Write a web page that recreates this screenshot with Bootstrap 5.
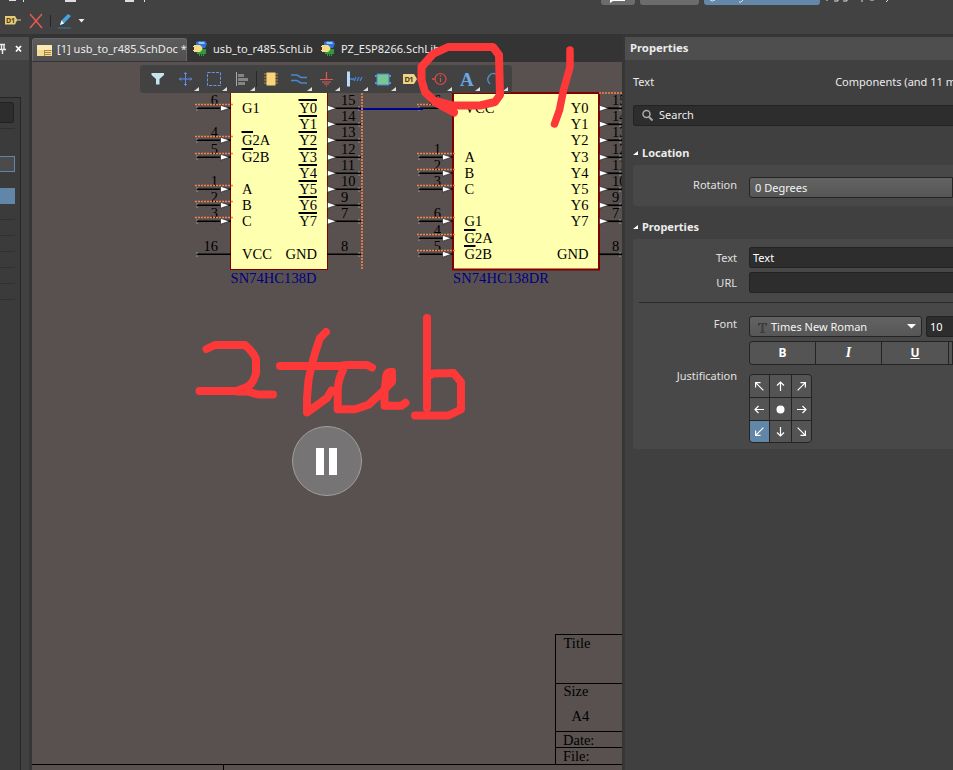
<!DOCTYPE html>
<html lang="en">
<head>
<meta charset="utf-8">
<title>usb_to_r485.SchDoc</title>
<link href="https://cdn.jsdelivr.net/npm/bootstrap@5.3.0/dist/css/bootstrap.min.css" rel="stylesheet">
<style>
body{font:11px/16px "Noto Sans","Open Sans",sans-serif;color:#ececec;background:#363636;width:953px;height:770px}
svg{display:block;flex:none}
.topbar{height:34px;background:#424242}
.leftbar{width:29px;background:#414141;margin-top:3px}
.left-head{height:23px;background:#4e4e4e}
.left-box{margin-top:37px;width:21px;background:#3b3b3b;border:1px solid #252525;border-left:0;border-bottom:0;height:673px}
.left-input{width:14px;height:21px;margin-top:4px;background:#2d2d2d;border:1px solid #222;border-left:0;border-radius:0 3px 3px 0}
.left-edit{width:15px;height:16px;margin-top:27px;border:1px solid #6186a8;border-left:0;background:#4b4b4b}
.left-sel{width:15px;height:16px;margin-top:16px;background:#6186a8}
.left-line{width:15px;height:16px;border-bottom:1px solid #303030}
.docs{width:590px;margin-left:3px}
.tabs{height:28px;background:#343434;padding-top:4px}
.tab-cell{height:23px}
.tab-lib{width:128px}
.tab-on{width:155px;height:23px;background:linear-gradient(#5c5c5c,#505050);border:1px solid #686868;border-bottom:0;border-radius:3px 3px 0 0}
.tab-txt{letter-spacing:.04px;position:relative;top:-1px}
.tools{left:108px;top:3px;width:372px;height:28px;background:#424242;border-radius:4px}
.pause{left:260px;top:364px;width:70px;height:70px;background:#767474;border:1px solid #a09e9e}
.pause-bars{gap:5px;margin-right:2px}
.pause i{width:8px;height:27px;background:#fff}
.ink{left:0;top:0;pointer-events:none}
.props{width:328px;margin:3px 0 0 3px;background:#404040}
.props-head{height:23px;background:#4e4e4e;padding:3px 5px;font-weight:700;font-size:11.300px}
.props-scope{height:45px;padding:14px 0 0 8px}
.components{margin-left:181px}
.search{height:21px;margin-left:8px;padding:0 0 2px 8px;background:#2d2d2d;border:1px solid #222;border-right:0;border-radius:3px 0 0 3px}
.sec{margin-left:8px;font-weight:700;height:16px}
.box{margin-left:8px;background:#484848;border-radius:3px 0 0 3px}
.lab{width:104px;text-align:right;margin-right:12px;color:#e0e0e0;flex:none}
.field{height:21px;background:#2d2d2d;border:1px solid #222;border-radius:3px 0 0 3px;border-right:0;padding:1px 3px;line-height:18px;color:#fff}
.pick{background:linear-gradient(#636363,#565656);border:1px solid #242424;height:21px;border-radius:3px;color:#f4f4f4;line-height:19px}
.style-btn{width:66px;height:22px;border-right:1px solid #242424;background:#545454;font-size:12px;line-height:21px;color:#fff}
.style-set{height:24px;border:1px solid #242424;border-right:0;border-radius:4px 0 0 4px}
.just{display:grid;grid-template-columns:19px 21px 19px;grid-template-rows:22px 22px 21px;gap:1px;background:#242424;border:1px solid #242424;border-radius:4px;width:63px;height:69px;overflow:hidden}
.just span{background:#545454}
.just .on{background:#6186a8}
</style>
<script src="https://cdn.jsdelivr.net/npm/bootstrap@5.3.0/dist/js/bootstrap.bundle.min.js"></script>
</head>
<body class="position-relative overflow-hidden d-flex flex-column">
<header class="topbar flex-shrink-0">
<svg width="953" height="34">
<g fill="#ddd"><path d="M9 0h7v1h-7zM65 0h11v2h-11zM125 0h9v2h-9zM23 0h1v2h-1zM144 0h1v2h-1z"/></g>
<path d="M601 0h34v2q0 3-3 3h-28q-3 0-3-3zM640 0h59v2q0 3-3 3h-53q-3 0-3-3z" fill="#6c6c6c"/>
<path d="M704 0h116v2q0 3-3 3H707q-3 0-3-3z" fill="#6388a9"/>
<path d="M610 0h15v1h-12l-3 2z" fill="#fff"/>
<g fill="none" stroke="#e0e0e0"><path d="M710 0q2 2 5 0M739 2h2l2-2M827 0v1M834 1h4v-1M843 1h4v-1M862 0v2M870 0h4M886 2l2-2"/></g>
<path d="M5 16h10l2 3.500h4v1h-4l-2 4H5z" fill="#e9cb76"/><text x="6" y="23" font-size="7" font-weight="700" fill="#4b4022" textLength="9">D1</text>
<path d="M30 14l12 14M42 14L30 28" stroke="#e2594f" stroke-width="1.600"/>
<path d="M50.500 15v12" stroke="#262626"/>
<path d="M60 25l1.500-4.500L68 14l3 2-7 7.500z" fill="#45a5df"/><path d="M60 25l1.500-4.500 2.500 3z" fill="#fff"/><path d="M58 28h13" stroke="#2c78a8"/>
<path d="M78.500 19h6l-3 3.500z" fill="#eee"/>
</svg>
</header>
<main class="d-flex flex-grow-1">
<aside class="leftbar flex-shrink-0">
<div class="left-head"><svg width="29" height="23"><path d="M0 7.500h5M1.500 7v5M4 7v5M0 12.500h6M2.500 12v5" stroke="#eee" stroke-width="1.400"/><path d="M16 9l5 5.500M21 9l-5 5.500" stroke="#fff" stroke-width="1.800"/></svg></div>
<div class="left-box"><div class="left-input"></div><div class="left-line" style="height:6px"></div><div class="left-edit"></div><div class="left-sel"></div>
<div class="left-line"></div><div class="left-line"></div><div class="left-line"></div><div class="left-line"></div><div class="left-line"></div><div class="left-line"></div></div>
</aside>
<section class="docs flex-shrink-0 d-flex flex-column">
<nav class="tabs d-flex">
<div class="tab-on d-flex align-items-center">
<svg width="24" height="21"><path d="M4 5h15v11H4z" fill="#f5dc92"/><path d="M4 5h15v5H4z" fill="#fae9b4"/><path d="M11.500 10.500h7M12 12.500h6M12 14.500h6M11.500 10v6" stroke="#a88b46"/></svg>
<span class="tab-txt text-nowrap">[1] usb_to_r485.SchDoc *</span></div>
<div class="tab-cell tab-lib d-flex align-items-center"><svg width="26" height="23"><path d="M9 4l3-1h6l2 3-2 4H9z" fill="#2f74d6"/><path d="M11 4h6l1 2h-6z" fill="#8fc4ff"/><path d="M9 11h10v5h-2v2h-1v-2h-1v2h-1v-2h-1v2h-1v-2h-2z" fill="#2d9b37"/><path d="M6 8h1V7h6q5 3.500 0 7H7v-1H6v-1h1V9H6z" fill="#f8dc88"/></svg><span class="tab-txt">usb_to_r485.SchLib</span></div>
<div class="tab-cell d-flex align-items-center"><svg width="26" height="23"><path d="M9 4l3-1h6l2 3-2 4H9z" fill="#2f74d6"/><path d="M11 4h6l1 2h-6z" fill="#8fc4ff"/><path d="M9 11h10v5h-2v2h-1v-2h-1v2h-1v-2h-1v2h-1v-2h-2z" fill="#2d9b37"/><path d="M6 8h1V7h6q5 3.500 0 7H7v-1H6v-1h1V9H6z" fill="#f8dc88"/></svg><span class="tab-txt">PZ_ESP8266.SchLib</span></div>
</nav>
<div class="position-relative">
<svg width="590" height="708" viewBox="32 62 590 708" font-family="'Liberation Serif',serif" font-size="14.500">
<rect x="32" y="62" width="590" height="708" fill="#585150"/>
<rect x="230.500" y="80.500" width="97" height="189" fill="#ffffb0" stroke="#800000"/>
<rect x="453" y="93" width="146" height="176.500" fill="#ffffb0" stroke="#800000" stroke-width="2"/>
<g id="pins"></g>
<path d="M359 109h64" stroke="#000090" stroke-width="2"/>
<path d="M362 93v176" stroke="#f5834c" stroke-width="1.600" stroke-dasharray="2 1"/>
<path d="M599 93h23" stroke="#f5834c" stroke-width="1.500" stroke-dasharray="2 1"/>
<g fill="#000080"><text x="230.500" y="283" textLength="86">SN74HC138D</text><text x="453" y="283" textLength="96">SN74HC138DR</text></g>
<path d="M555.500 764V634.500H622M555 683.500h67M555 731.500h67M555 747.500h67M32 764.500h590M223.500 764v6" fill="none" stroke="#000"/>
<text x="563.500" y="648">Title</text><text x="563.500" y="696">Size</text><text x="571.500" y="721">A4</text><text x="563" y="745">Date:</text><text x="563" y="761">File:</text>
</svg>
<div class="tools position-absolute">
<svg width="372" height="28" viewBox="140 65 372 28" fill="none">
<path d="M151.500 73h12.500v2l-4.500 4v5.500h-3.500V79l-4.500-4z" fill="#c5e4ee"/>
<path d="M179 79h13M185.500 72.500v13M184 74l1.500-1.500L187 74M184 84l1.500 1.500L187 84M181 77.500l-1.500 1.500 1.500 1.500M190 77.500l1.500 1.500-1.500 1.500" stroke="#5d8ee6"/>
<path d="M207.500 72.500h13v13h-13z" stroke="#6a92ee" stroke-dasharray="3 1.300"/>
<path d="M236.500 72v14" stroke="#aaa"/><path d="M238 74h6v3h-6zM238 78h10v3h-10zM238 82h7v3h-7z" fill="#858585"/>
<path d="M256.500 71v16" stroke="#292929"/>
<path d="M264 74h14M264 77h14M264 80h14M264 83h14" stroke="#b88a3c"/><path d="M266.500 72.500h9v13h-9z" fill="#fbd37b"/>
<path d="M291 75h6l4 2.500h6M291 80.500h6l4 2.500h6" stroke="#448bd0" stroke-width="1.500"/>
<path d="M326.500 72v7M320 79.500h13M322 82h9M324 84h5M326 86h1" stroke="#dd5b55" stroke-width="1.200"/>
<path d="M347 71.500h3v15h-3z" fill="#b6dcff"/><path d="M350 79h4M354 81l2-4M357 81l2-4M360 81l2-4" stroke="#4a84de" stroke-width="1.300"/>
<path d="M375 76h16M375 83h16" stroke="#5d91d9" stroke-width="2"/><path d="M377 74h12v11h-12z" fill="#76c795" stroke="#4e82cd"/>
<path d="M403 74h11l3 5-3 5h-11z" fill="#efd382"/><text x="404.500" y="82" font-size="7.500" font-weight="700" fill="#4b4022" textLength="9">D1</text>
<circle cx="440.500" cy="79" r="5.500" stroke="#e04c48" stroke-width="1.200"/><path d="M440.500 75v1.500M440.500 78v4M432 79h3" stroke="#e04c48" stroke-width="1.300"/>
<text x="460" y="86" font-family="Liberation Serif,serif" font-weight="700" font-size="19" fill="#6ba8e6">A</text>
<path d="M490 84q-4-4-1-8t7-2" stroke="#558ed2" stroke-width="1.300"/>
<path d="M199 87v4h-5zM227 87v4h-5zM255 87v4h-5zM312 87v4h-5zM340 87v4h-5zM368 87v4h-5zM396 87v4h-5zM452 87v4h-5zM480 87v4h-5zM508 87v4h-5z" fill="#ddd"/>
</svg></div>
<div class="pause position-absolute rounded-circle d-flex justify-content-center align-items-center"><div class="pause-bars d-flex"><i></i><i></i></div></div>
</div>
</section>
<aside class="props flex-shrink-0 overflow-hidden">
<div class="props-head">Properties</div>
<div class="props-scope d-flex text-nowrap"><span>Text</span><span class="components">Components (and 11 more)</span></div>
<div class="search d-flex align-items-center"><svg width="17" height="16"><circle cx="4.500" cy="7" r="3.500" fill="none" stroke="#aaa" stroke-width="1.500"/><path d="M7 10l3.500 3.500" stroke="#aaa" stroke-width="2"/></svg><span>Search</span></div>
<div class="sec d-flex align-items-center" style="margin-top:19px"><svg width="9" height="8"><path d="M5 2v4H0z" fill="#fff"/></svg><span>Location</span></div>
<div class="box d-flex" style="height:41px;margin-top:4px;padding-top:12px"><span class="lab">Rotation</span><div class="pick flex-grow-1 rounded-end-0" style="padding-left:5px">0 Degrees</div></div>
<div class="sec d-flex align-items-center" style="margin-top:13px"><svg width="9" height="8"><path d="M5 2v4H0z" fill="#fff"/></svg><span>Properties</span></div>
<div class="box" style="height:210px;margin-top:4px;padding-top:8px">
<div class="d-flex"><span class="lab" style="height:25px;padding-top:3px">Text</span><div class="field flex-grow-1">Text</div></div>
<div class="d-flex"><span class="lab" style="height:30px;padding-top:3px">URL</span><div class="field flex-grow-1"></div></div>
<div style="height:1px;background:#2b2b2b;margin-left:6px"></div>
<div class="d-flex" style="margin-top:13px"><span class="lab">Font</span><div class="pick d-flex align-items-center" style="width:173px"><svg width="21" height="18"><path d="M8 5h9v3h-1l-1-2h-1.500v8h1.500v1h-5v-1h1.500V6H10L9 8H8z" fill="#3c3c3c"/></svg><span class="flex-grow-1">Times New Roman</span><svg width="14" height="8"><path d="M0 1h9L4.500 5.500z" fill="#fff"/></svg></div><div class="field flex-grow-1" style="margin-left:4px">10</div></div>
<div class="d-flex" style="margin-top:4px"><span class="lab"></span><div class="style-set d-flex overflow-hidden flex-grow-1 text-center fw-bold"><span class="style-btn flex-shrink-0">B</span><span class="style-btn flex-shrink-0 fst-italic" style="font-family:'Liberation Serif',serif;font-size:14px">I</span><span class="style-btn flex-shrink-0 text-decoration-underline" style="width:67px">U</span><span class="style-btn"></span></div></div>
<div class="d-flex" style="margin-top:9px"><span class="lab" style="margin-top:-6px">Justification</span><div class="just" id="just"></div></div>
</div>
</aside>
</main>
<svg class="ink position-absolute" width="953" height="770" fill="none" stroke="#fd3838" stroke-width="8" stroke-linecap="round" stroke-linejoin="round">
<path d="M206.500 349l8.500-4h30q9 8 11 14v14q-2 9-8 13.500l-11.500 4.500h-37M237 391.500h10l11 3h15"/>
<path d="M326 332l-6 6-5 15q-4 14-6.500 27l-1.500 18v14.500L327 398l4.500-7.500M280 366h60l7-1h20l5 2.500M343 370q-5 10-5.300 20v19.300H355l13.500-4.500 13-12 10.500-11v-10q-6 0-6 7l-1.500 13v14h17l4-3"/>
<path d="M427 318v90M427 377l6-3.500 20.500-.5 7.500 9v27.500l-12.500 6H415"/>
<path d="M570 50v17l-6.500 23-4 20-5 14" stroke-width="7.500"/><path d="M454 112.500L436.500 103 425 92l-3.500-12V67L433 54l15-7h45l6 8 1 40-5 7-15 3.500h-27L436 101"/>
</svg>
<script>
// Pins: side, wire y, number, name, overline, arrow shown, error mark without arrow
const chips=[
 {l:231,r:327,nl:242,nr:317,numL:218,numR:341,out:361,pins:[
  ['L',108,6,'G1',0,1],['L',140,4,'G2A',1,1],['L',157,5,'G2B',1,1],['L',189,1,'A',0,1],['L',205,2,'B',0,1],['L',221,3,'C',0,1],['L',254,16,'VCC',0,0],
  ['R',108,15,'Y0',2,1],['R',124,14,'Y1',2,1],['R',140,13,'Y2',2,1],['R',157,12,'Y3',2,1],['R',173,11,'Y4',2,1],['R',189,10,'Y5',2,1],['R',205,9,'Y6',2,1],['R',221,7,'Y7',2,1],['R',254,8,'GND',0,0]]},
 {l:453,r:599,nl:464.5,nr:588.5,numL:441,numR:612,out:622,pins:[
  ['L',108,16,'VCC',0,0,1],['L',157,1,'A',0,1],['L',173,2,'B',0,1],['L',189,3,'C',0,1],['L',221,6,'G1',0,1],['L',238,4,'G2A',1,1],['L',254,5,'G2B',1,1],
  ['R',108,15,'Y0',0,1],['R',124,14,'Y1',0,1],['R',140,13,'Y2',0,1],['R',157,12,'Y3',0,1],['R',173,11,'Y4',0,1],['R',189,10,'Y5',0,1],['R',205,9,'Y6',0,1],['R',221,7,'Y7',0,1],['R',254,8,'GND',0,0]]}];
let s='';
for(const c of chips)for(const [side,y,n,name,bar,arrow,wave] of c.pins){
 const L=side=='L',a=L?c.l-34:c.r,b=L?c.l:c.out;
 s+=`<path d="M${a} ${y+.25}H${b}" stroke="#000" stroke-width="1.700"/>`;
 s+=`<text x="${L?c.numL:c.numR}" y="${y-3}" text-anchor="${L?'end':'start'}">${n}</text>`;
 s+=`<text x="${L?c.nl:c.nr}" y="${y+5.3}" text-anchor="${L?'start':'end'}">${name}</text>`;
 if(arrow){const x=L?c.l-11:c.r;s+=`<path d="M${x+.5} ${y-2.700}l9 2.900-9 3z" fill="#fff" stroke="#111" stroke-width=".6"/>`;}
 if(L&&(arrow||wave))s+=`<path d="M${c.l-36} ${y-3.500}h39" stroke="#f5834c" stroke-width="1.500" stroke-dasharray="2 1"/>`;
 if(bar)s+=L?`<path d="M${c.nl-.5} ${y-8}h11.500" stroke="#000" stroke-width="2"/>`:`<path d="M${c.nr-18.500} ${y-8}h18.500" stroke="#000" stroke-width="2"/>`;
 const e=L?c.l-34:c.out-2;
 s+=`<path d="M${e} ${y-2}v5" stroke="#77777e" stroke-width="2" stroke-dasharray="1.500 2"/>`;
}
document.getElementById('pins').innerHTML=s;
// Justification grid, each arrow is the up arrow rotated
document.getElementById('just').innerHTML=[-45,0,45,-90,null,90,-135,180,135].map((d,i)=>
 `<span class="d-flex align-items-center justify-content-center${i==6?' on':''}"><svg width="13" height="13">${d===null?'<circle cx="6.500" cy="6.500" r="4" fill="#fff"/>':`<path transform="rotate(${d} 6.500 6.500)" d="M6.500 ${d%90?1:2}V${d%90?12:11}M3 ${d%90?4.500:5.500}L6.500 ${d%90?1:2}l3.500 3.500" fill="none" stroke="#fff" stroke-width="1.200"/>`}</svg></span>`).join('');
</script>
</body>
</html>
